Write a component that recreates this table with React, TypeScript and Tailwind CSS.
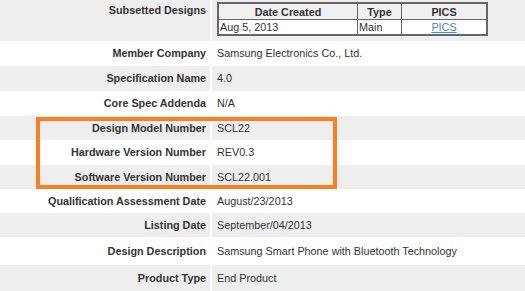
import React from 'react';

const rows: { label: string; value: string; h: string }[] = [
  { label: 'Member Company', value: 'Samsung Electronics Co., Ltd.', h: 'h-[25px]' },
  { label: 'Specification Name', value: '4.0', h: 'h-[25px]' },
  { label: 'Core Spec Addenda', value: 'N/A', h: 'h-[25px]' },
  { label: 'Design Model Number', value: 'SCL22', h: 'h-[24px]' },
  { label: 'Hardware Version Number', value: 'REV0.3', h: 'h-[25px]' },
  { label: 'Software Version Number', value: 'SCL22.001', h: 'h-[24px]' },
  { label: 'Qualification Assessment Date', value: 'August/23/2013', h: 'h-[24px]' },
  { label: 'Listing Date', value: 'September/04/2013', h: 'h-[24px]' },
  { label: 'Design Description', value: 'Samsung Smart Phone with Bluetooth Technology', h: 'h-[28px]' },
  { label: 'Product Type', value: 'End Product', h: 'h-[26px]' },
];

export default function App() {
  return (
    <div className="relative w-[525px] h-[291px] overflow-hidden bg-white text-[10.8px] text-[#333] font-['Liberation_Sans',Arial,sans-serif]">
      <div className="grid grid-cols-[210px_1fr] gap-x-[2px]">
        {/* subsetted designs */}
        <div className="h-[41px] bg-[#eeeeee] text-right pr-[4px] pt-[2px] font-bold">Subsetted Designs</div>
        <div className="h-[41px] bg-[#eeeeee] pl-[5px] pt-[2px]">
          <div className="w-[271px] border-2 border-[#666] bg-white">
            <div className="grid grid-cols-[139px_44px_1fr] h-[16px] bg-[#f0f0f0] border-b border-[#666] font-bold text-center leading-[16px]">
              <div className="border-r border-[#666]">Date Created</div>
              <div className="border-r border-[#666]">Type</div>
              <div>PICS</div>
            </div>
            <div className="grid grid-cols-[139px_44px_1fr] h-[14px] leading-[14px]">
              <div className="border-r border-[#666] pl-[1px]">Aug 5, 2013</div>
              <div className="border-r border-[#666] pl-[1px]">Main</div>
              <div className="text-center">
                <a href="#" className="text-[#3a8ec6] underline">PICS</a>
              </div>
            </div>
          </div>
        </div>

        {rows.map((r, i) => {
          const bg = i % 2 === 0 ? 'bg-white' : 'bg-[#eeeeee]';
          return (
            <React.Fragment key={r.label}>
              <div className={`${r.h} ${bg} flex items-center justify-end pr-[4px] font-bold`}>{r.label}</div>
              <div className={`${r.h} ${bg} flex items-center pl-[5px]`}>{r.value}</div>
            </React.Fragment>
          );
        })}
      </div>

      {/* highlight annotation */}
      <div className="absolute left-[36px] top-[117px] w-[301px] h-[72px] border-[4px] border-[#fb7d24]" />
    </div>
  );
}
